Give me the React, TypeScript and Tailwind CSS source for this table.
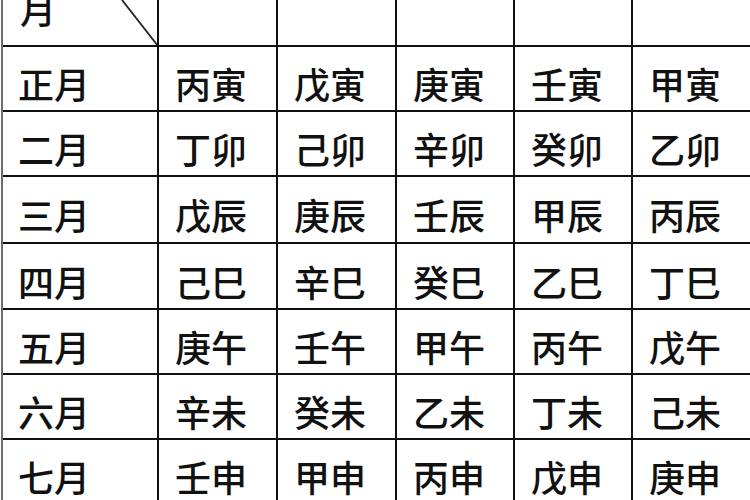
const rows = [
  { month: "正月", h: "h-[65px]", cells: ["丙寅", "戊寅", "庚寅", "壬寅", "甲寅"] },
  { month: "二月", h: "h-[65px]", cells: ["丁卯", "己卯", "辛卯", "癸卯", "乙卯"] },
  { month: "三月", h: "h-[67px]", cells: ["戊辰", "庚辰", "壬辰", "甲辰", "丙辰"] },
  { month: "四月", h: "h-[66px]", cells: ["己巳", "辛巳", "癸巳", "乙巳", "丁巳"] },
  { month: "五月", h: "h-[65px]", cells: ["庚午", "壬午", "甲午", "丙午", "戊午"] },
  { month: "六月", h: "h-[65px]", cells: ["辛未", "癸未", "乙未", "丁未", "己未"] },
  { month: "七月", h: "h-[65px]", cells: ["壬申", "甲申", "丙申", "戊申", "庚申"] },
];

const cols = "grid grid-cols-[154px_119px_119px_118px_118px_1fr]";

function Cell({ text }: { text: string }) {
  return (
    <div className="flex items-center border-l-2 border-[#111] pl-[16px] pt-[9px]">
      {text}
    </div>
  );
}

export default function App() {
  return (
    <div
      className="h-[500px] w-[750px] overflow-hidden bg-white text-[36px] font-medium leading-none text-[#111]"
      style={{ fontFamily: '"Noto Sans CJK SC", "Noto Sans CJK JP", sans-serif' }}
    >
      <div className="ml-[1px] border-l-2 border-[#6b6b6b]">
        {/* header row, cut off at the top */}
        <div className={`${cols} h-[45px]`}>
          <div className="relative overflow-hidden pl-[17px]">
            <span className="-mt-[10px] block">月</span>
            <svg className="absolute inset-0" width="154" height="45" viewBox="0 0 154 45">
              <line x1="119" y1="0" x2="155" y2="46" stroke="#222" strokeWidth="1.8" />
            </svg>
          </div>
          <div className="border-l-2 border-[#111]" />
          <div className="border-l-2 border-[#111]" />
          <div className="border-l-2 border-[#111]" />
          <div className="border-l-2 border-[#111]" />
          <div className="border-l-2 border-[#111]" />
        </div>

        {rows.map((r) => (
          <div key={r.month} className={`${cols} ${r.h} border-t-2 border-[#111]`}>
            <div className="flex items-center pl-[15px] pt-[9px]">{r.month}</div>
            {r.cells.map((c) => (
              <Cell key={c} text={c} />
            ))}
          </div>
        ))}
      </div>
    </div>
  );
}
